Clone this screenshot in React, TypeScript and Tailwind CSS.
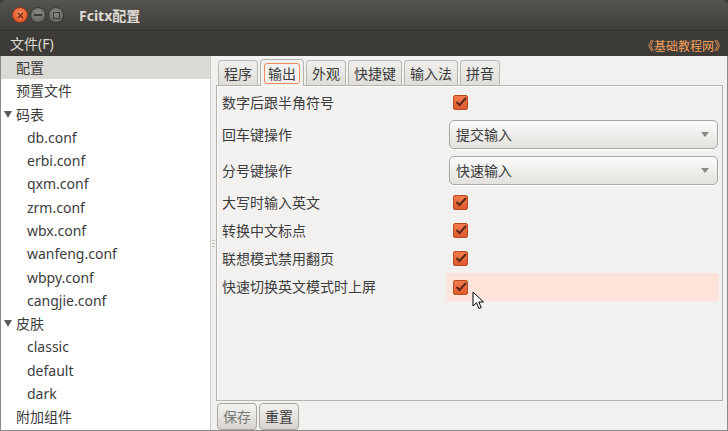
import React from 'react';

const font = { fontFamily: '"Noto Sans", "Noto Sans CJK SC", sans-serif' };

const tree = [
  { label: '配置', level: 0, selected: true },
  { label: '预置文件', level: 0 },
  { label: '码表', level: 0, open: true },
  { label: 'db.conf', level: 1 },
  { label: 'erbi.conf', level: 1 },
  { label: 'qxm.conf', level: 1 },
  { label: 'zrm.conf', level: 1 },
  { label: 'wbx.conf', level: 1 },
  { label: 'wanfeng.conf', level: 1 },
  { label: 'wbpy.conf', level: 1 },
  { label: 'cangjie.conf', level: 1 },
  { label: '皮肤', level: 0, open: true },
  { label: 'classic', level: 1 },
  { label: 'default', level: 1 },
  { label: 'dark', level: 1 },
  { label: '附加组件', level: 0 },
];

const tabs = ['程序', '输出', '外观', '快捷键', '输入法', '拼音'];

function Check() {
  return (
    <div className="w-[15px] h-[15px] rounded-[2px] bg-gradient-to-b from-[#f47a4e] to-[#dd5a2c] border border-[#b94a22] flex items-center justify-center">
      <svg width="12" height="10" viewBox="0 0 12 10">
        <path d="M1.5 5 L4.5 8 L11 1" fill="none" stroke="#5a2a18" strokeWidth="2" />
      </svg>
    </div>
  );
}

function Combo({ value }: { value: string }) {
  return (
    <div className="w-[269px] h-[29px] ml-[2px] rounded-[5px] border border-[#aaa69f] bg-gradient-to-b from-[#fbfbfa] to-[#e4e2de] flex items-center justify-between px-[6px] text-[14px] text-[#3c3c3c] shadow-[0_1px_0_#fff]">
      <span>{value}</span>
      <svg width="8" height="5" viewBox="0 0 8 5" className="mr-[2px]">
        <path d="M0 0 L8 0 L4 5 Z" fill="#8a8782" />
      </svg>
    </div>
  );
}

function WinBtn({ kind }: { kind: 'close' | 'min' | 'max' }) {
  const bg =
    kind === 'close'
      ? 'bg-[radial-gradient(circle_at_50%_35%,#f7865a,#e0501c)] border-[#9b3a15]'
      : 'bg-[radial-gradient(circle_at_50%_35%,#8a8984,#5d5c58)] border-[#3a3935]';
  return (
    <div className={`w-[16px] h-[16px] rounded-full border ${bg} flex items-center justify-center`}>
      {kind === 'close' && (
        <svg width="7" height="7" viewBox="0 0 8 8">
          <path d="M1 1 L7 7 M7 1 L1 7" stroke="#5b2410" strokeWidth="1.4" />
        </svg>
      )}
      {kind === 'min' && <div className="w-[8px] h-[2px] bg-[#3c3b37]" />}
      {kind === 'max' && <div className="w-[7px] h-[7px] border-[1.5px] border-[#3c3b37]" />}
    </div>
  );
}

export default function App() {
  const rows: { label: string; kind: 'check' | 'combo'; value?: string; hover?: boolean }[] = [
    { label: '数字后跟半角符号', kind: 'check' },
    { label: '回车键操作', kind: 'combo', value: '提交输入' },
    { label: '分号键操作', kind: 'combo', value: '快速输入' },
    { label: '大写时输入英文', kind: 'check' },
    { label: '转换中文标点', kind: 'check' },
    { label: '联想模式禁用翻页', kind: 'check' },
    { label: '快速切换英文模式时上屏', kind: 'check', hover: true },
  ];

  return (
    <div className="w-[728px] h-[431px] flex flex-col overflow-hidden bg-[#3c3b37]" style={font}>
      {/* title bar */}
      <div className="h-[30px] flex items-center bg-gradient-to-b from-[#55544f] to-[#3e3d39] rounded-t-[6px] pl-[12px]">
        <div className="flex gap-[2px]">
          <WinBtn kind="close" />
          <WinBtn kind="min" />
          <WinBtn kind="max" />
        </div>
        <div className="ml-[15px] text-[14px] font-bold text-[#dfdbd2]">Fcitx配置</div>
      </div>

      {/* menu bar */}
      <div className="h-[26px] flex items-center justify-between bg-[#3c3b37] border-t border-[#2f2e2b] pl-[10px] pr-[2px] text-[14px]">
        <span className="text-[#dfdbd2]">文件(F)</span>
        <span className="text-[#f4a05a] text-[12px] pt-[6px]">《基础教程网》</span>
      </div>

      {/* body */}
      <div className="flex-1 flex bg-[#f2f1f0] border-l border-r border-b border-[#8c8a86]">
        {/* tree */}
        <div className="w-[210px] bg-white flex flex-col text-[14px] text-[#3c3c3c] border-r border-[#cfccc6]">
          {tree.map((t) => (
            <div
              key={t.label}
              className={`h-[23.27px] flex items-center ${t.selected ? 'bg-[#dcdad5]' : ''}`}
            >
              <div className="w-[14px] flex justify-center">
                {t.open && (
                  <svg width="8" height="7" viewBox="0 0 8 7">
                    <path d="M0 0 L8 0 L4 7 Z" fill="#5c5c5c" />
                  </svg>
                )}
              </div>
              <span className={t.level === 1 ? 'ml-[12px]' : 'ml-[1px]'}>{t.label}</span>
            </div>
          ))}
        </div>

        {/* pane handle */}
        <div className="w-[5px] flex items-center justify-center">
          <div className="flex flex-col gap-[2px]">
            <div className="w-[3px] h-[1px] bg-[#c0bdb7]" />
            <div className="w-[3px] h-[1px] bg-[#c0bdb7]" />
            <div className="w-[3px] h-[1px] bg-[#c0bdb7]" />
          </div>
        </div>

        {/* right pane */}
        <div className="flex-1 flex flex-col pr-[4px] pt-[2px]">
          <div className="flex items-end h-[27px] pl-[2px] gap-[2px]">
            {tabs.map((t, i) =>
              i === 1 ? (
                <div
                  key={t}
                  className="h-[27px] px-[3px] pt-[3px] rounded-t-[4px] border border-b-0 border-[#b5b2ab] bg-[#f2f1f0] relative top-[1px]"
                >
                  <div className="h-[21px] px-[3px] flex items-center border border-[#f08a5d] rounded-[3px] text-[14px] text-[#3c3c3c]">
                    {t}
                  </div>
                </div>
              ) : (
                <div
                  key={t}
                  className="h-[25px] px-[5px] flex items-center rounded-t-[4px] border border-b-0 border-[#bcb9b2] bg-gradient-to-b from-[#f0efed] to-[#e0ded9] text-[14px] text-[#3c3c3c]"
                >
                  {t}
                </div>
              )
            )}
          </div>
          <div className="h-[316px] border border-[#b5b2ab] bg-[#f2f1f0] flex flex-col pt-[2px] shadow-[inset_1px_1px_0_#fff]">
            {rows.map((r) => (
              <div
                key={r.label}
                className={`flex items-center text-[14px] text-[#3c3c3c] ${r.kind === 'combo' ? 'h-[36px]' : 'h-[28px]'}`}
              >
                <div className="w-[230px] pl-[5px]">{r.label}</div>
                <div
                  className={`flex-1 h-full flex items-center mr-[3px] relative ${r.hover ? 'bg-[#fde3da] h-[24px] mt-[2px]' : ''}`}
                >
                  {r.kind === 'check' ? (
                    <div className="ml-[6px]">
                      <Check />
                    </div>
                  ) : (
                    <Combo value={r.value!} />
                  )}
                  {r.hover && (
                    <svg
                      width="13"
                      height="20"
                      viewBox="0 0 13 20"
                      className="absolute left-[25px] top-[18px]"
                    >
                      <path
                        d="M1 1 L1 15 L4.5 11.8 L7 17.5 L9.2 16.5 L6.8 11 L11.5 11 Z"
                        fill="#fff"
                        stroke="#000"
                        strokeWidth="1"
                        strokeLinejoin="round"
                      />
                    </svg>
                  )}
                </div>
              </div>
            ))}
          </div>
          <div className="flex gap-[2px] pt-[2px] pl-[1px]">
            <button className="h-[27px] px-[5px] rounded-[4px] border border-[#aaa69f] bg-gradient-to-b from-[#f4f3f1] to-[#d8d5cf] text-[14px] text-[#777]">
              保存
            </button>
            <button className="h-[27px] px-[5px] rounded-[4px] border border-[#aaa69f] bg-gradient-to-b from-[#f4f3f1] to-[#d8d5cf] text-[14px] text-[#3c3c3c]">
              重置
            </button>
          </div>
        </div>
      </div>
    </div>
  );
}
